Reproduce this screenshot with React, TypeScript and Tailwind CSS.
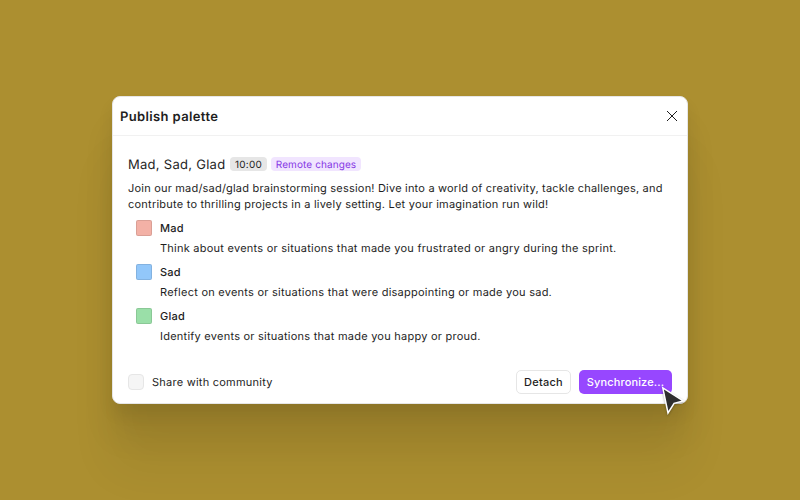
const emotions = [
  { name: "Mad", fill: "bg-[#f3b1a6]", text: "Think about events or situations that made you frustrated or angry during the sprint." },
  { name: "Sad", fill: "bg-[#92c7fa]", text: "Reflect on events or situations that were disappointing or made you sad." },
  { name: "Glad", fill: "bg-[#9adfa8]", text: "Identify events or situations that made you happy or proud." },
];

function Header() {
  return (
    <header className="flex h-[39px] items-center justify-between border-b border-[#f1f1f1] pl-[7px] pr-[10px]">
      <h1 className="pt-0.5 text-[13px] font-semibold leading-4 tracking-[0.37px]">Publish palette</h1>
      <svg width="10" height="10" viewBox="0 0 10 10" className="overflow-visible" fill="none" stroke="#1e1e1e" strokeWidth="1">
        <path d="M0 0L10 10M10 0L0 10" />
      </svg>
    </header>
  );
}

function Emotion({ name, fill, text }: { name: string; fill: string; text: string }) {
  return (
    <li className="flex h-11 flex-col gap-1 pl-2">
      <div className="flex h-4 items-center gap-2">
        <span className={"size-4 rounded-xs border border-black/10 " + fill} />
        <span className="font-medium leading-4">{name}</span>
      </div>
      <p className="pl-6 leading-4">{text}</p>
    </li>
  );
}

export default function App() {
  return (
    <div className="flex h-[500px] w-[800px] items-center justify-center overflow-hidden bg-[#ac8f30] font-['Inter',sans-serif] text-[11px] leading-4 tracking-[0.24px] text-[#1e1e1e] antialiased [text-rendering:geometricPrecision]">
      <main className="relative flex h-[308px] w-[576px] flex-col rounded-lg border border-[#e6e6e6] bg-white shadow-[0_64px_48px_rgba(0,0,0,0.06),0_32px_32px_rgba(0,0,0,0.07),0_10px_16px_rgba(0,0,0,0.07)]">
        <Header />
        <section className="flex flex-1 flex-col px-[15px] pt-5">
          <div className="flex h-4 items-center">
            <h2 className="w-[98px] whitespace-nowrap pt-0.5 text-[13px] leading-4 tracking-[0.28px]">Mad, Sad, Glad</h2>
            <span className="ml-1 flex h-[14px] w-[37px] items-center justify-center rounded bg-[#e6e6e6] pt-px text-[10px] tracking-[0.2px]">10:00</span>
            <span className="ml-1 flex h-[14px] w-[90px] items-center justify-center rounded bg-[#f1e5ff] pt-px text-[10px] tracking-[0.1px] text-[#8638e5]">Remote changes</span>
          </div>
          <p className="mt-2 whitespace-nowrap tracking-[0.2px]">
            Join our mad/sad/glad brainstorming session! Dive into a world of creativity, tackle challenges, and
            <br />
            <span className="tracking-[0.225px]">contribute to thrilling projects in a lively setting. Let your imagination run wild!</span>
          </p>
          <ul className="mt-2 flex flex-col whitespace-nowrap">
            {emotions.map((e) => <Emotion key={e.name} {...e} />)}
          </ul>
        </section>
        <footer className="flex h-[41px] items-start justify-between px-[15px] pt-2">
          <label className="flex h-6 items-center gap-2">
            <span className="size-4 rounded border border-[#e6e6e6] bg-[#f5f5f5]" />
            Share with community
          </label>
          <div className="flex gap-2 font-medium">
            <button className="h-6 w-[55px] rounded-[5px] border border-[#e6e6e6] tracking-[0.25px]">Detach</button>
            <button className="h-6 w-[93px] rounded-[5px] bg-[#9747ff] tracking-[0.13px] text-white">Synchronize...</button>
          </div>
        </footer>
        <svg className="absolute left-[547px] top-[287px] overflow-visible drop-shadow-[0_1px_1px_rgba(0,0,0,0.3)]" width="26" height="31" viewBox="0 0 26 31">
          <path d="M2.8 3.8L23.2 16.9L14.1 19.4L8 29Z" fill="#2e2e2e" stroke="white" strokeWidth="1.5" />
        </svg>
      </main>
    </div>
  );
}
